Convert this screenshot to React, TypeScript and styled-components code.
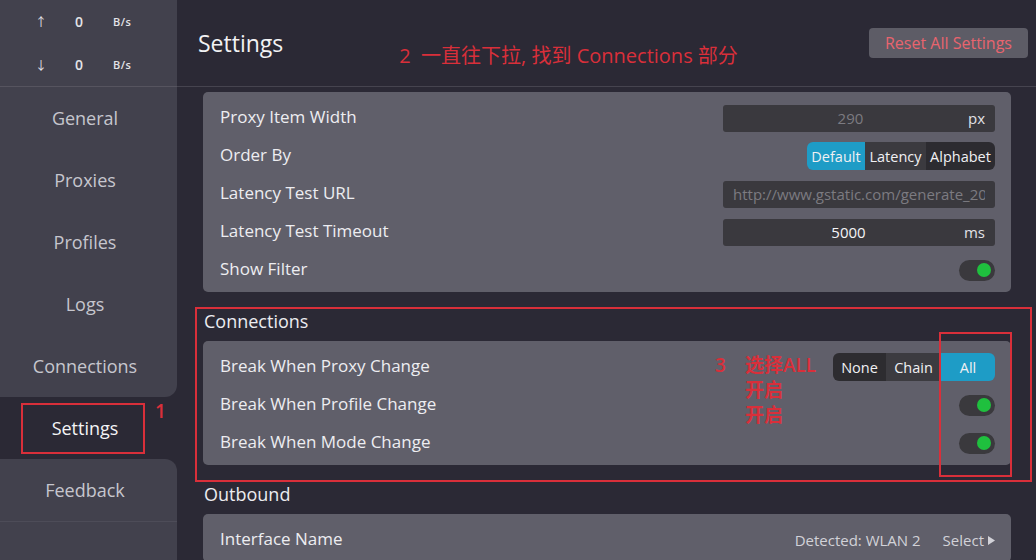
import React from 'react';
import styled, { createGlobalStyle } from 'styled-components';

const GlobalStyle = createGlobalStyle`
  html, body {
    margin: 0;
    padding: 0;
    background: #2b2935;
  }
  body {
    font-family: "Open Sans", "Noto Sans CJK SC", sans-serif;
  }
  * {
    box-sizing: border-box;
  }
`;

const RED = '#d92f3a';

const Page = styled.div`
  position: relative;
  display: flex;
  width: 1036px;
  height: 560px;
  overflow: hidden;
  background: #2b2935;
`;

const Sidebar = styled.aside`
  width: 177px;
  flex-shrink: 0;
  display: flex;
  flex-direction: column;
  background: #2b2935;
`;

const Stats = styled.div`
  height: 87px;
  background: #42414d;
  border-bottom: 1px solid #56545f;
  display: flex;
  flex-direction: column;
`;

const StatRow = styled.div`
  flex: 1;
  display: flex;
  align-items: center;
  padding-left: 35px;
  color: #e4e4e8;
`;

const Arrow = styled.span`
  width: 10px;
  text-align: center;
  font-size: 12px;
`;

const StatNum = styled.span`
  width: 10px;
  margin-left: 29px;
  text-align: center;
  font-size: 14px;
  font-weight: 600;
`;

const StatUnit = styled.span`
  margin-left: 29px;
  font-size: 11px;
  font-weight: 600;
  letter-spacing: 0.5px;
`;

const NavItem = styled.div<{ $active?: boolean; $before?: boolean; $after?: boolean }>`
  height: 62px;
  display: flex;
  align-items: center;
  justify-content: center;
  padding-right: 7px;
  font-size: 18px;
  color: ${(p) => (p.$active ? '#f4f4f6' : '#c6c6ce')};
  background: ${(p) => (p.$active ? '#2b2935' : '#42414d')};
  border-bottom-right-radius: ${(p) => (p.$before ? '12px' : '0')};
  border-top-right-radius: ${(p) => (p.$after ? '12px' : '0')};
`;

const SideFiller = styled.div`
  flex: 1;
  background: #42414d;
  border-top: 1px solid #4d4c58;
`;

const Main = styled.main`
  flex: 1;
  display: flex;
  flex-direction: column;
  min-width: 0;
`;

const Header = styled.header`
  height: 87px;
  flex-shrink: 0;
  display: flex;
  align-items: center;
  padding: 0 8px 0 21px;
  border-bottom: 1px solid #46444f;
`;

const Title = styled.h1`
  margin: 0;
  font-size: 23px;
  font-weight: 400;
  color: #f2f2f4;
`;

const HeaderNote = styled.span`
  margin-left: 116px;
  margin-top: 22px;
  font-size: 20px;
  color: ${RED};
  white-space: pre;
`;

const ResetButton = styled.button`
  margin-left: auto;
  width: 159px;
  height: 30px;
  border: none;
  border-radius: 4px;
  background: #5d5c66;
  color: #e8646e;
  font-family: inherit;
  font-size: 16px;
`;

const Content = styled.div`
  flex: 1;
  overflow: hidden;
  padding: 5px 25px 0 26px;
`;

const Card = styled.section`
  background: #605f6a;
  border-radius: 5px;
  padding: 7px 16px 3px 17px;
`;

const Row = styled.div`
  height: 38px;
  display: flex;
  align-items: center;
  justify-content: space-between;
`;

const Label = styled.span`
  font-size: 17px;
  line-height: 22px;
  margin-top: -2px;
  color: #ededf1;
`;

const SectionTitle = styled.h2`
  margin: 0;
  padding: 17px 0 8px 1px;
  font-size: 18px;
  line-height: 24px;
  font-weight: 400;
  color: #ececf0;
`;

const Field = styled.div`
  width: 272px;
  height: 27px;
  display: flex;
  align-items: center;
  background: #3a393e;
  border-radius: 3px;
  padding: 0 10px;
  overflow: hidden;
`;

const FieldValue = styled.span<{ $muted?: boolean; $align?: string }>`
  flex: 1;
  text-align: ${(p) => p.$align || 'center'};
  font-size: 15px;
  color: ${(p) => (p.$muted ? '#7c7b81' : '#f4f4f6')};
  white-space: nowrap;
  overflow: hidden;
`;

const Unit = styled.span`
  font-size: 15px;
  color: #e2e2e6;
`;

const Segment = styled.div`
  display: flex;
  height: 28px;
  border-radius: 6px;
  overflow: hidden;
`;

const SegButton = styled.span<{ $bg: string; $w: number }>`
  width: ${(p) => p.$w}px;
  display: flex;
  align-items: center;
  justify-content: center;
  font-size: 14.5px;
  color: #f0f0f3;
  background: ${(p) => p.$bg};
`;

const Toggle = styled.span`
  position: relative;
  width: 36px;
  height: 21px;
  border-radius: 11px;
  background: #3a393d;
`;

const Knob = styled.span`
  position: absolute;
  right: 4px;
  top: 3.5px;
  width: 14px;
  height: 14px;
  border-radius: 50%;
  background: #1fc03e;
`;

const Detected = styled.div`
  display: flex;
  align-items: center;
  gap: 22px;
  font-size: 15px;
  color: #d2d2d8;
`;

const SelectLink = styled.span`
  display: flex;
  align-items: center;
  gap: 4px;
`;

const RedBox = styled.div`
  position: absolute;
  border: 2px solid ${RED};
  pointer-events: none;
`;

const RedText = styled.div`
  position: absolute;
  color: ${RED};
  font-size: 19px;
  line-height: 25px;
  font-weight: 600;
`;

const NoteLines = styled.div`
  display: flex;
  flex-direction: column;
`;

const Note3 = styled(RedText)`
  display: flex;
  gap: 19px;
`;

const Switch = () => (
  <Toggle>
    <Knob />
  </Toggle>
);

const navItems = ['General', 'Proxies', 'Profiles', 'Logs', 'Connections', 'Settings', 'Feedback'];
const activeIndex = 5;

const App = () => {
  return (
    <Page>
      <GlobalStyle />
      <Sidebar>
        <Stats>
          <StatRow>
            <Arrow>↑</Arrow>
            <StatNum>0</StatNum>
            <StatUnit>B/s</StatUnit>
          </StatRow>
          <StatRow>
            <Arrow>↓</Arrow>
            <StatNum>0</StatNum>
            <StatUnit>B/s</StatUnit>
          </StatRow>
        </Stats>
        {navItems.map((item, i) => (
          <NavItem
            key={item}
            $active={i === activeIndex}
            $before={i === activeIndex - 1}
            $after={i === activeIndex + 1}
          >
            {item}
          </NavItem>
        ))}
        <SideFiller />
      </Sidebar>

      <Main>
        <Header>
          <Title>Settings</Title>
          <HeaderNote>{'2  一直往下拉, 找到 Connections 部分'}</HeaderNote>
          <ResetButton>Reset All Settings</ResetButton>
        </Header>

        <Content>
          <Card>
            <Row>
              <Label>Proxy Item Width</Label>
              <Field>
                <FieldValue $muted>290</FieldValue>
                <Unit>px</Unit>
              </Field>
            </Row>
            <Row>
              <Label>Order By</Label>
              <Segment>
                <SegButton $bg="#1e9cc6" $w={58}>Default</SegButton>
                <SegButton $bg="#3b3a3f" $w={61}>Latency</SegButton>
                <SegButton $bg="#2c2b30" $w={69}>Alphabet</SegButton>
              </Segment>
            </Row>
            <Row>
              <Label>Latency Test URL</Label>
              <Field>
                <FieldValue $muted $align="left">http://www.gstatic.com/generate_204</FieldValue>
              </Field>
            </Row>
            <Row>
              <Label>Latency Test Timeout</Label>
              <Field>
                <FieldValue>5000</FieldValue>
                <Unit>ms</Unit>
              </Field>
            </Row>
            <Row>
              <Label>Show Filter</Label>
              <Switch />
            </Row>
          </Card>

          <SectionTitle>Connections</SectionTitle>
          <Card>
            <Row>
              <Label>Break When Proxy Change</Label>
              <Segment>
                <SegButton $bg="#2d2c30" $w={53}>None</SegButton>
                <SegButton $bg="#3c3b40" $w={55}>Chain</SegButton>
                <SegButton $bg="#1e9cc6" $w={54}>All</SegButton>
              </Segment>
            </Row>
            <Row>
              <Label>Break When Profile Change</Label>
              <Switch />
            </Row>
            <Row>
              <Label>Break When Mode Change</Label>
              <Switch />
            </Row>
          </Card>

          <SectionTitle>Outbound</SectionTitle>
          <Card>
            <Row>
              <Label>Interface Name</Label>
              <Detected>
                <span>Detected: WLAN 2</span>
                <SelectLink>
                  Select
                  <svg width="7" height="9" viewBox="0 0 7 9">
                    <path d="M0 0 L7 4.5 L0 9 Z" fill="#d2d2d8" />
                  </svg>
                </SelectLink>
              </Detected>
            </Row>
          </Card>
        </Content>
      </Main>

      <RedBox style={{ left: 21, top: 403, width: 124, height: 51 }} />
      <RedText style={{ left: 155, top: 399 }}>1</RedText>
      <RedBox style={{ left: 195, top: 307, width: 837, height: 175 }} />
      <RedBox style={{ left: 939, top: 332, width: 73, height: 145 }} />
      <Note3 style={{ left: 715, top: 353 }}>
        <span>3</span>
        <NoteLines>
          <span>选择ALL</span>
          <span>开启</span>
          <span>开启</span>
        </NoteLines>
      </Note3>
    </Page>
  );
};

export default App;
